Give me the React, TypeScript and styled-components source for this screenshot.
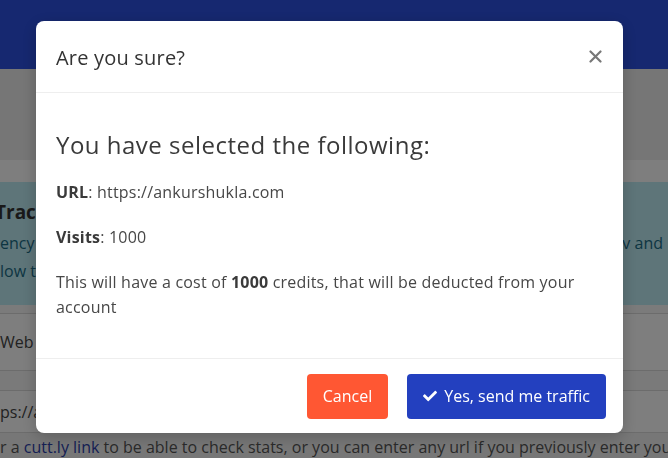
import React from 'react';
import styled, { createGlobalStyle } from 'styled-components';
import { FaCheck } from 'react-icons/fa';

const GlobalStyle = createGlobalStyle`
  html, body {
    margin: 0;
    padding: 0;
    height: 100%;
    overflow: hidden;
  }
  body {
    font-family: 'Open Sans', 'Lato', sans-serif;
    background: #eeeeee;
  }
  * { box-sizing: border-box; }
`

const Page = styled.div`
  width: 668px;
  height: 458px;
  overflow: hidden;
  display: flex;
  flex-direction: column;
  background: #eeeeee;
`
const NavBar = styled.header`
  height: 69px;
  flex-shrink: 0;
  background: #2c50e0;
`
const Band = styled.div<{ $h: number; $bg: string }>`
  height: ${p => p.$h}px;
  flex-shrink: 0;
  background: ${p => p.$bg};
`
const InfoAlert = styled.section`
  height: 123px;
  flex-shrink: 0;
  background: #bceaf2;
  color: #1a6b85;
  padding: 16px 5px 0 0;
  font-size: 16px;
  line-height: 28px;
`
const AlertTitle = styled.h4`
  margin: 0 0 3px;
  font-size: 19px;
  font-weight: 700;
  color: #333;
  text-indent: -5px;
  line-height: 28px;
`
const AlertLine = styled.div`
  display: flex;
  justify-content: space-between;
  white-space: nowrap;
`
const Field = styled.div<{ $h: number }>`
  height: ${p => p.$h}px;
  flex-shrink: 0;
  border-top: 1px solid #d8d8d8;
  border-bottom: 1px solid #d8d8d8;
  background: #fcfcfc;
  color: #444;
  font-size: 16px;
  display: flex;
  align-items: center;
`
const HelpText = styled.p`
  margin: 3px 0 0;
  white-space: nowrap;
  font-size: 16px;
  color: #555;
  a {
    color: #2b3fa8;
    text-decoration: none;
  }
`

const Backdrop = styled.div`
  position: fixed;
  inset: 0;
  background: rgba(0, 0, 0, 0.5);
  display: flex;
  align-items: flex-start;
  padding: 21px 0 0 36px;
`
const Dialog = styled.div`
  width: 587px;
  height: 412px;
  background: #fff;
  border-radius: 8px;
  display: flex;
  flex-direction: column;
  box-shadow: 0 4px 16px rgba(0, 0, 0, 0.2);
  color: #444;
`
const DialogHeader = styled.div`
  display: flex;
  align-items: center;
  justify-content: space-between;
  padding: 22px 21px 19px 20px;
  border-bottom: 1px solid #eeeeee;
`
const DialogTitle = styled.h5`
  margin: 0;
  font-size: 20px;
  font-weight: 400;
  letter-spacing: 0.2px;
  line-height: 30px;
  color: #333;
`
const CloseButton = styled.button`
  border: none;
  background: none;
  padding: 0;
  width: 13px;
  height: 13px;
  display: flex;
  cursor: pointer;
  margin-top: -4px;
`
const DialogBody = styled.div`
  flex: 1;
  padding: 37px 20px 0 20px;
`
const Heading = styled.h2`
  margin: 0 0 21px;
  font-size: 24px;
  font-weight: 400;
  letter-spacing: 0.5px;
  line-height: 29px;
  color: #3a3a3a;
`
const Para = styled.p`
  margin: 0 0 20px;
  font-size: 16px;
  letter-spacing: 0.2px;
  line-height: 25px;
  color: #474747;
  b {
    color: #3a3a3a;
    font-weight: 700;
  }
`
const DialogFooter = styled.div`
  display: flex;
  justify-content: flex-end;
  align-items: center;
  gap: 19px;
  height: 75px;
  padding: 0 17px 0 0;
  border-top: 1px solid #eeeeee;
`
const Button = styled.button<{ $variant: 'cancel' | 'confirm' }>`
  height: 45px;
  border: none;
  border-radius: 4px;
  padding: 0 16px;
  font-family: 'Open Sans', sans-serif;
  font-size: 16px;
  color: #fff;
  display: flex;
  align-items: center;
  gap: 7px;
  cursor: pointer;
  background: ${p => (p.$variant === 'cancel' ? '#ff5733' : '#2340bf')};
`

const App: React.FC = () => {
  return (
    <>
      <GlobalStyle />
      <Page>
        <NavBar />
        <Band $h={91} $bg="#ececec" />
        <Band $h={22} $bg="#fcfcfc" />
        <InfoAlert>
          <AlertTitle>Track</AlertTitle>
          <AlertLine>
            <span>ency</span>
            <span>v and</span>
          </AlertLine>
          <AlertLine>
            <span>low t</span>
          </AlertLine>
        </InfoAlert>
        <Band $h={8} $bg="#f6f6f6" />
        <Field $h={58}>Web</Field>
        <Band $h={19} $bg="#f4f4f4" />
        <Field $h={43}>ps://a</Field>
        <HelpText>
          r a <a href="#">cutt.ly link</a> to be able to check stats, or you can enter any url if you previously enter your
        </HelpText>
      </Page>
      <Backdrop>
        <Dialog>
          <DialogHeader>
            <DialogTitle>Are you sure?</DialogTitle>
            <CloseButton aria-label="Close">
              <svg width="13" height="13" viewBox="0 0 13 13">
                <path d="M1.5 1.5 L11.5 11.5 M11.5 1.5 L1.5 11.5" stroke="#777" strokeWidth="2.2" strokeLinecap="round" />
              </svg>
            </CloseButton>
          </DialogHeader>
          <DialogBody>
            <Heading>You have selected the following:</Heading>
            <Para><b>URL</b>: https://ankurshukla.com</Para>
            <Para><b>Visits</b>: 1000</Para>
            <Para>This will have a cost of <b>1000</b> credits, that will be deducted from your account</Para>
          </DialogBody>
          <DialogFooter>
            <Button $variant="cancel">Cancel</Button>
            <Button $variant="confirm"><FaCheck size={14} />Yes, send me traffic</Button>
          </DialogFooter>
        </Dialog>
      </Backdrop>
    </>
  );
};

export default App;
